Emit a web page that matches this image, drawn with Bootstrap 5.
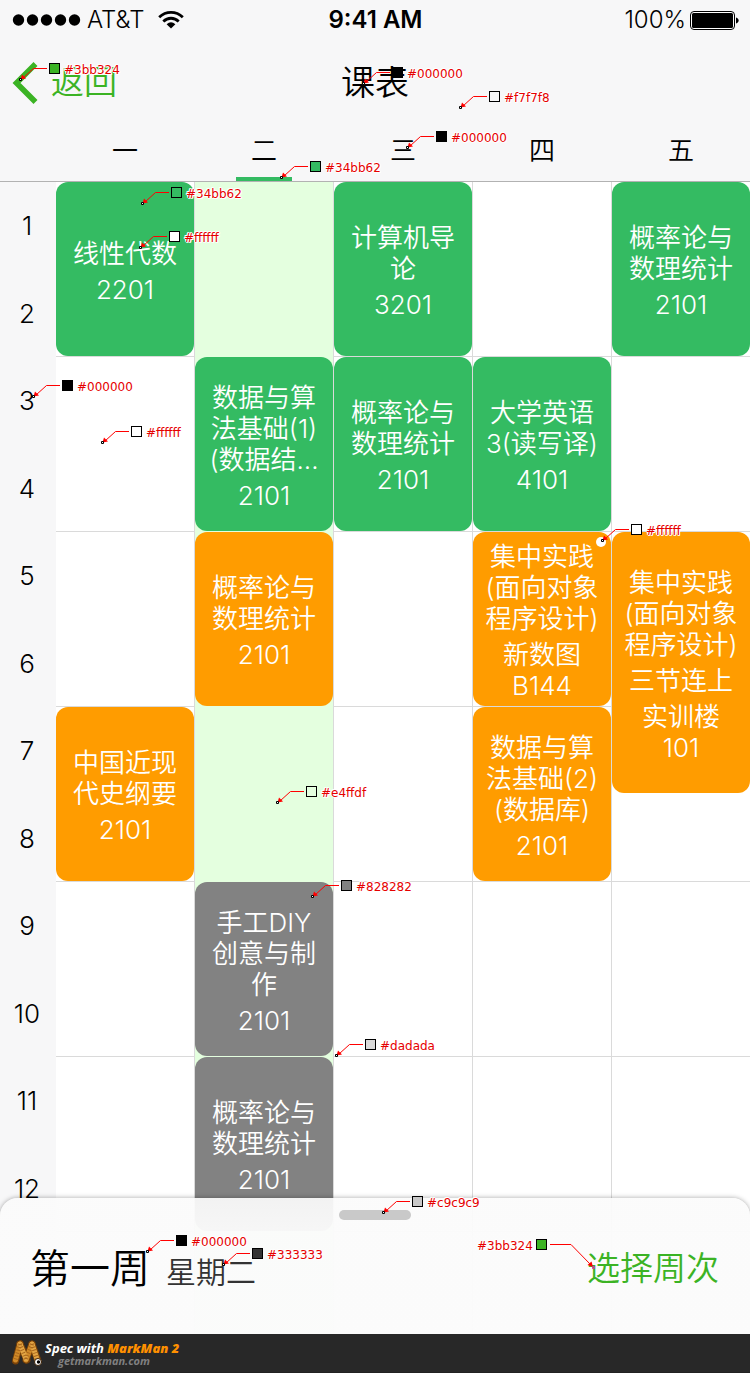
<!DOCTYPE html>
<html lang="zh-CN">
<head>
<meta charset="utf-8">
<meta name="viewport" content="width=device-width, initial-scale=1">
<title>课表</title>
<link href="https://cdn.jsdelivr.net/npm/bootstrap@5.3.0/dist/css/bootstrap.min.css" rel="stylesheet">
<style>
  :root { --leaf: #3bb324; --green: #34bb62; --orange: #ff9c00; --gray: #828282; --line: #dadada; --bar: #f7f7f8; }
  body { font-family: Inter, "Noto Sans CJK SC", sans-serif; font-weight: 350; color: #000; background: #fff; line-height: 1.2; }
  .top-bar { background: var(--bar); border-bottom: 1px solid #b2b2b2; }
  .status-bar { height: 41px; font-size: 24px; padding: 0 11px 0 12px; }
  .signal { margin-right: 6px; }
  .wifi { margin-left: 14px; }
  .side { flex: 1 1 0; }
  .title-bar { height: 84px; font-size: 34px; padding: 0 12px; }
  .title-bar h1 { font-size: 34px; font-weight: 350; }
  .back { color: var(--leaf); font-size: 33px; font-weight: 350; gap: 13px; }
  .gutter { width: 56px; flex: none; }
  .day-grid { display: grid; grid-template-columns: repeat(5, minmax(0, 1fr)); column-gap: 1px; }
  .day-tab { height: 56px; padding: 0 0 6px; font-size: 26px; font-weight: 350; color: #000; }
  .day-tab.current::after { content: ""; position: absolute; left: 50%; bottom: 0; width: 56px; margin-left: -28px; height: 4px; background: var(--green); }
  .periods { background: var(--bar); font-size: 26px; padding-right: 2px; }
  .period-pair { height: 175px; }
  .week { background: var(--line); }
  .day { display: grid; grid-template-rows: repeat(6, 174px) 102px; row-gap: 1px; background: #fff repeating-linear-gradient(transparent 0 174px, var(--line) 174px 175px); }
  .day.today { background: #e4ffdf; }
  .course { border-radius: 12px; color: #fff; font-size: 26px; line-height: 31px; gap: 5px; height: 174px; padding-top: 4px; position: relative; white-space: nowrap; }
  .course.triple { height: 261px; }
  .course.go { background: var(--green); }
  .course.warm { background: var(--orange); }
  .course.off { background: var(--gray); }
  .r2 { grid-row: 2; } .r3 { grid-row: 3; } .r4 { grid-row: 4; } .r5 { grid-row: 5; } .r6 { grid-row: 6; }
  .r34 { grid-row: 3 / span 2; }
  .dot { top: 5px; right: 5px; width: 10px; height: 10px; background: #fff; }
  .sheet { position: relative; margin-top: -136px; height: 136px; border-radius: 18px 18px 0 0; padding: 12px 31px 0 30px; box-shadow: 0 0 5px rgba(0,0,0,.35); background: linear-gradient(rgba(251,251,251,.93), rgba(251,251,251,.97) 40px, rgba(251,251,251,.98)); }
  .grip { width: 72px; height: 10px; background: #c9c9c9; }
  .week-no { font-size: 40px; }
  .week-day { font-size: 30px; color: #333; }
  .pick { font-size: 33px; font-weight: 350; color: var(--leaf); }
  .credit { height: 39px; background: #282828; font-family: "Open Sans", sans-serif; font-style: italic; font-weight: 700; padding-left: 11px; gap: 2px; border-bottom: 1px solid #222; }
  .credit a { color: #fff; font-size: 13px; line-height: 14px; }
  .credit small { color: #808080; font-size: 11px; line-height: 11px; padding-left: 13px; }
  .credit b { color: #ff9000; }
  .pin { position: absolute; left: var(--x); top: var(--y); font: 12px/14px "DejaVu Sans", sans-serif; color: #e60000; gap: 3px; text-shadow: 1px 0 #fff, -1px 0 #fff, 0 1px #fff, 0 -1px #fff, 1px 1px #fff, -1px -1px #fff; pointer-events: none; }
  .pin svg { flex: none; }
</style>
</head>
<body>
<svg class="d-none">
  <symbol id="leader" viewBox="0 0 42 20">
    <path d="M28 5.500H14.500L4 15" fill="none" stroke="red"/>
    <path d="M1.500 16.500L3 11.500L7 15.500Z" fill="red"/>
    <path d="M.5 15.500h2v2h-2z" fill="#fff" stroke="#000"/>
    <rect x="30.500" y=".5" width="10" height="10" fill="currentColor" stroke="#000"/>
  </symbol>
</svg>
<div class="position-relative min-vh-100 overflow-hidden">
  <header class="top-bar">
    <div class="status-bar d-flex align-items-center">
      <div class="side d-flex align-items-center">
        <svg width="69" height="14" viewBox="0 0 69 14" class="signal"><circle cx="6.500" cy="7" r="5.700"/><circle cx="20.500" cy="7" r="5.700"/><circle cx="34.500" cy="7" r="5.700"/><circle cx="48.500" cy="7" r="5.700"/><circle cx="62.500" cy="7" r="5.700"/></svg>
        <span>AT&amp;T</span>
        <svg width="26" height="20" viewBox="0 0 26 20" class="wifi" fill="none" stroke="#000" stroke-width="2.800"><path d="M1.200 7.300C8 .8 18 .8 24.800 7.300"/><path d="M5.300 11.400C9.800 7.200 16.200 7.200 20.700 11.400"/><path d="M8.600 14.300Q13 10.400 17.400 14.300L13 18.600Z" fill="#000" stroke="none"/></svg>
      </div>
      <div class="fw-semibold">9:41 AM</div>
      <div class="side d-flex align-items-center justify-content-end">
        <span>100%</span>
        <svg width="49" height="19" viewBox="0 0 49 19" class="ms-1"><rect x=".5" y=".5" width="44" height="18" rx="3.500" fill="#fff" stroke="#000"/><rect x="2" y="2" width="41" height="15" rx="1.500"/><path d="M46 6.500c3.500 1 3.500 5 0 6z"/></svg>
      </div>
    </div>
    <div class="title-bar d-flex align-items-center">
      <div class="side">
        <button type="button" class="back btn p-0 border-0 d-inline-flex align-items-center"><svg width="26" height="44" viewBox="0 0 26 44" fill="none" stroke="currentColor" stroke-width="5.600"><path d="M23.500 3L4.500 22L23.500 41"/></svg>返回</button>
      </div>
      <h1 class="m-0">课表</h1>
      <div class="side"></div>
    </div>
    <nav class="d-flex">
      <div class="gutter"></div>
      <div class="day-grid flex-fill">
        <button type="button" class="day-tab btn border-0 rounded-0">一</button>
        <button type="button" class="day-tab current btn border-0 rounded-0 position-relative">二</button>
        <button type="button" class="day-tab btn border-0 rounded-0">三</button>
        <button type="button" class="day-tab btn border-0 rounded-0">四</button>
        <button type="button" class="day-tab btn border-0 rounded-0">五</button>
      </div>
    </nav>
  </header>

  <main class="d-flex">
    <div class="periods gutter text-center">
      <div class="period-pair d-grid align-items-center"><span>1</span><span>2</span></div>
      <div class="period-pair d-grid align-items-center"><span>3</span><span>4</span></div>
      <div class="period-pair d-grid align-items-center"><span>5</span><span>6</span></div>
      <div class="period-pair d-grid align-items-center"><span>7</span><span>8</span></div>
      <div class="period-pair d-grid align-items-center"><span>9</span><span>10</span></div>
      <div class="period-pair d-grid align-items-center"><span>11</span><span>12</span></div>
    </div>
    <div class="week day-grid flex-fill text-center">
      <section class="day">
        <div class="course go d-flex flex-column justify-content-center"><div>线性代数</div><div>2201</div></div>
        <div class="course warm r4 d-flex flex-column justify-content-center"><div>中国近现<br>代史纲要</div><div>2101</div></div>
      </section>
      <section class="day today">
        <div class="course go r2 d-flex flex-column justify-content-center"><div>数据与算<br>法基础(1)<br>(数据结...</div><div>2101</div></div>
        <div class="course warm r3 d-flex flex-column justify-content-center"><div>概率论与<br>数理统计</div><div>2101</div></div>
        <div class="course off r5 d-flex flex-column justify-content-center"><div>手工DIY<br>创意与制<br>作</div><div>2101</div></div>
        <div class="course off r6 d-flex flex-column justify-content-center"><div>概率论与<br>数理统计</div><div>2101</div></div>
      </section>
      <section class="day">
        <div class="course go d-flex flex-column justify-content-center"><div>计算机导<br>论</div><div>3201</div></div>
        <div class="course go r2 d-flex flex-column justify-content-center"><div>概率论与<br>数理统计</div><div>2101</div></div>
      </section>
      <section class="day">
        <div class="course go r2 d-flex flex-column justify-content-center"><div>大学英语<br>3(读写译)</div><div>4101</div></div>
        <div class="course warm r3 d-flex flex-column justify-content-center"><div>集中实践<br>(面向对象<br>程序设计)</div><div>新数图<br>B144</div><span class="dot position-absolute rounded-circle"></span></div>
        <div class="course warm r4 d-flex flex-column justify-content-center"><div>数据与算<br>法基础(2)<br>(数据库)</div><div>2101</div></div>
      </section>
      <section class="day">
        <div class="course go d-flex flex-column justify-content-center"><div>概率论与<br>数理统计</div><div>2101</div></div>
        <div class="course warm triple r34 d-flex flex-column justify-content-center"><div>集中实践<br>(面向对象<br>程序设计)</div><div>三节连上</div><div>实训楼<br>101</div></div>
      </section>
    </div>
  </main>

  <section class="sheet">
    <div class="grip rounded-pill mx-auto"></div>
    <div class="d-flex align-items-center justify-content-between pt-4">
      <div class="d-flex align-items-baseline gap-3"><span class="week-no">第一周</span><span class="week-day">星期二</span></div>
      <button type="button" class="pick btn p-0 border-0">选择周次</button>
    </div>
  </section>

  <footer class="credit d-flex align-items-center position-relative">
    <svg width="32" height="28" viewBox="0 0 32 28" fill="none" stroke-linecap="round">
      <g stroke="#7a4208" stroke-width="7"><path d="M9 5L4.500 22"/><path d="M9 5L16 21"/><path d="M21 5L15 21"/><path d="M21 5L27 22"/></g>
      <g stroke="#d08a28" stroke-width="5"><path d="M9 5L4.500 21"/><path d="M21 5L15 21"/></g>
      <g stroke="#e3a645" stroke-width="5"><path d="M9 5L15 20"/><path d="M21 5L26 20"/></g>
      <g stroke="#a8661c" stroke-width="4" stroke-linecap="butt" stroke-dasharray="1 2"><path d="M9 5L4.500 21"/><path d="M9 5L15 21"/><path d="M21 5L15 21"/><path d="M21 5L26 20"/></g>
      <circle cx="27" cy="23" r="3.500" fill="#fff" stroke="#3a2005"/><circle cx="27.500" cy="23" r="1.700" fill="#000"/>
    </svg>
    <div class="d-flex flex-column"><a href="#" class="text-decoration-none">Spec with <b>MarkMan 2</b></a><small>getmarkman.com</small></div>
  </footer>

  <div class="pin d-flex" style="--x:19px;--y:63px"><svg width="42" height="20" color="#3bb324"><use href="#leader"/></svg>#3bb324</div>
  <div class="pin d-flex" style="--x:362px;--y:67px"><svg width="42" height="20" color="#000000"><use href="#leader"/></svg>#000000</div>
  <div class="pin d-flex" style="--x:459px;--y:91px"><svg width="42" height="20" color="#f7f7f8"><use href="#leader"/></svg>#f7f7f8</div>
  <div class="pin d-flex" style="--x:406px;--y:131px"><svg width="42" height="20" color="#000000"><use href="#leader"/></svg>#000000</div>
  <div class="pin d-flex" style="--x:280px;--y:161px"><svg width="42" height="20" color="#34bb62"><use href="#leader"/></svg>#34bb62</div>
  <div class="pin d-flex" style="--x:141px;--y:187px"><svg width="42" height="20" color="#34bb62"><use href="#leader"/></svg>#34bb62</div>
  <div class="pin d-flex" style="--x:139px;--y:231px"><svg width="42" height="20" color="#ffffff"><use href="#leader"/></svg>#ffffff</div>
  <div class="pin d-flex" style="--x:32px;--y:380px"><svg width="42" height="20" color="#000000"><use href="#leader"/></svg>#000000</div>
  <div class="pin d-flex" style="--x:101px;--y:426px"><svg width="42" height="20" color="#ffffff"><use href="#leader"/></svg>#ffffff</div>
  <div class="pin d-flex" style="--x:601px;--y:524px"><svg width="42" height="20" color="#ffffff"><use href="#leader"/></svg>#ffffff</div>
  <div class="pin d-flex" style="--x:276px;--y:786px"><svg width="42" height="20" color="#e4ffdf"><use href="#leader"/></svg>#e4ffdf</div>
  <div class="pin d-flex" style="--x:311px;--y:880px"><svg width="42" height="20" color="#828282"><use href="#leader"/></svg>#828282</div>
  <div class="pin d-flex" style="--x:335px;--y:1039px"><svg width="42" height="20" color="#dadada"><use href="#leader"/></svg>#dadada</div>
  <div class="pin d-flex" style="--x:382px;--y:1196px"><svg width="42" height="20" color="#c9c9c9"><use href="#leader"/></svg>#c9c9c9</div>
  <div class="pin d-flex" style="--x:146px;--y:1235px"><svg width="42" height="20" color="#000000"><use href="#leader"/></svg>#000000</div>
  <div class="pin d-flex" style="--x:222px;--y:1248px"><svg width="42" height="20" color="#333333"><use href="#leader"/></svg>#333333</div>
  <div class="pin d-flex" style="--x:477px;--y:1239px">#3bb324<svg width="60" height="30" viewBox="0 0 60 30"><rect x=".5" y=".5" width="10" height="10" fill="#3bb324" stroke="#000"/><path d="M14 5.500H35L55 26" fill="none" stroke="red"/><path d="M57 28L51.500 26L55.500 22.500Z" fill="red"/><path d="M56.500 27.500h2v2h-2z" stroke="#c3a" fill="none"/></svg></div>
</div>
<script src="https://cdn.jsdelivr.net/npm/bootstrap@5.3.0/dist/js/bootstrap.bundle.min.js"></script>
</body>
</html>
